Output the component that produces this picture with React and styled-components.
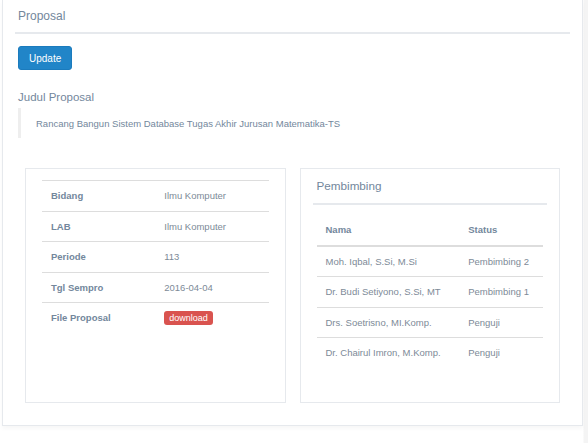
import React from "react";
import styled, { createGlobalStyle } from "styled-components";

const detail = [
  { label: "Bidang", value: "Ilmu Komputer" },
  { label: "LAB", value: "Ilmu Komputer" },
  { label: "Periode", value: "113" },
  { label: "Tgl Sempro", value: "2016-04-04" },
  { label: "File Proposal", download: true },
];

const pembimbing = [
  { nama: "Moh. Iqbal, S.Si, M.Si", status: "Pembimbing 2" },
  { nama: "Dr. Budi Setiyono, S.Si, MT", status: "Pembimbing 1" },
  { nama: "Drs. Soetrisno, MI.Komp.", status: "Penguji" },
  { nama: "Dr. Chairul Imron, M.Komp.", status: "Penguji" },
];

const App = () => {
  return (
    <>
      <GlobalStyle />
      <Page>
        <Panel>
          <TitleBar>
            <h2>Proposal</h2>
          </TitleBar>
          <Content>
            <PrimaryButton>Update</PrimaryButton>
            <Heading>Judul Proposal</Heading>
            <Quote>
              Rancang Bangun Sistem Database Tugas Akhir Jurusan Matematika-TS
            </Quote>

            <Columns>
              <Card>
                <DetailTable>
                  <tbody>
                    {detail.map((row) => (
                      <tr key={row.label}>
                        <th>{row.label}</th>
                        <td>
                          {row.download ? (
                            <DangerLabel>download</DangerLabel>
                          ) : (
                            row.value
                          )}
                        </td>
                      </tr>
                    ))}
                  </tbody>
                </DetailTable>
              </Card>

              <Card $padded>
                <CardTitle>Pembimbing</CardTitle>
                <ListTable>
                  <thead>
                    <tr>
                      <th className="nama">Nama</th>
                      <th>Status</th>
                    </tr>
                  </thead>
                  <tbody>
                    {pembimbing.map((p) => (
                      <tr key={p.nama}>
                        <td>{p.nama}</td>
                        <td>{p.status}</td>
                      </tr>
                    ))}
                  </tbody>
                </ListTable>
              </Card>
            </Columns>
          </Content>
        </Panel>
      </Page>
    </>
  );
};

export default App;

const GlobalStyle = createGlobalStyle`
  body {
    margin: 0;
    background: #ffffff;
    font-family: "Liberation Sans", Arial, Helvetica, sans-serif;
    color: #73879c;
  }
`;

const Page = styled.div`
  width: 588px;
  height: 443px;
  overflow: hidden;
  background: linear-gradient(to right, #ffffff 0, #ffffff 583px, #f4f4f4 584px);
`;

const Panel = styled.div`
  margin-left: 2px;
  width: 581px;
  box-sizing: border-box;
  background: #fff;
  border: 1px solid #e6e9ed;
  border-top: none;
  padding: 0 12px 22px;
  box-shadow: 0 3px 4px rgba(0, 0, 0, 0.03);
`;

const TitleBar = styled.div`
  height: 32px;
  display: flex;
  align-items: center;
  border-bottom: 2px solid #e6e9ed;

  h2 {
    margin: 0;
    padding-left: 3px;
    font-size: 12px;
    font-weight: 400;
    line-height: 14px;
    color: #73879c;
  }
`;

const Content = styled.div`
  padding: 0 3px;
  display: flex;
  flex-direction: column;
  align-items: flex-start;
`;

const PrimaryButton = styled.button`
  margin-top: 12px;
  height: 24px;
  padding: 0 10px;
  border: 1px solid #1b7bbd;
  border-radius: 3px;
  background: #2185c8;
  color: #fff;
  font-family: inherit;
  font-size: 10px;
`;

const Heading = styled.h4`
  margin: 20px 0 4px;
  font-size: 11.5px;
  line-height: 14px;
  font-weight: 400;
  color: #73879c;
`;

const Quote = styled.blockquote`
  margin: 0;
  align-self: stretch;
  padding: 8px 15px 6px 15px;
  border-left: 3px solid #eeeeee;
  font-size: 9.5px;
  line-height: 16px;
  color: #73879c;
`;

const Columns = styled.div`
  margin-top: 30px;
  align-self: stretch;
  display: grid;
  grid-template-columns: 1fr 1fr;
  column-gap: 14px;
  padding: 0 7px;
`;

const Card = styled.div`
  height: 235px;
  box-sizing: border-box;
  border: 1px solid #e6e9ed;
  background: #fff;
  padding: ${(p) => (p.$padded ? "0 12px" : "11px 16px")};
`;

const DetailTable = styled.table`
  width: 100%;
  border-collapse: collapse;
  font-size: 9.5px;

  th,
  td {
    width: 50%;
    text-align: left;
    padding: 8px 9px;
    line-height: 13.5px;
    border-top: 1px solid #dddddd;
    vertical-align: middle;
  }

  th {
    font-weight: 700;
    color: #73879c;
  }

  td {
    color: #7d8a97;
  }
`;

const DangerLabel = styled.span`
  display: inline-block;
  height: 14px;
  line-height: 14px;
  padding: 0 5px;
  border-radius: 3px;
  background: #d9534f;
  color: #fff;
  font-size: 9px;
`;

const CardTitle = styled.div`
  padding: 10px 4px 10px;
  font-size: 11.7px;
  line-height: 14px;
  border-bottom: 2px solid #e6e9ed;
  color: #73879c;
`;

const ListTable = styled.table`
  margin: 10px 4px 0;
  width: calc(100% - 8px);
  border-collapse: collapse;
  font-size: 9.5px;

  th,
  td {
    text-align: left;
    padding: 8px 9px;
    line-height: 13.5px;
  }

  th {
    font-weight: 700;
    border-bottom: 2px solid #dddddd;
    color: #73879c;
  }

  th.nama {
    width: 63%;
  }

  td {
    border-top: 1px solid #dddddd;
    color: #7d8a97;
  }

  tbody tr:first-child td {
    border-top: none;
  }
`;
